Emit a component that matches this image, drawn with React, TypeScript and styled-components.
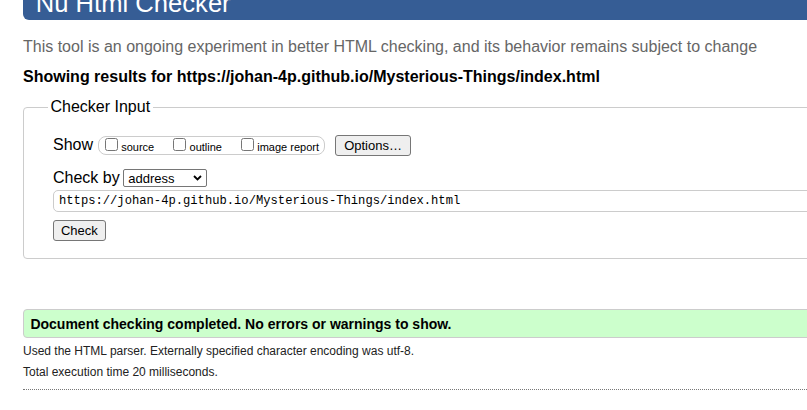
import React from "react";
import styled, { createGlobalStyle } from "styled-components";

const Global = createGlobalStyle`
  html, body { margin: 0; padding: 0; background: #fff; overflow: hidden; }
  body { font-family: "Liberation Sans", Arial, Helvetica, sans-serif; color: #000; }
`;

const Page = styled.div`
  width: 1100px;
  padding-left: 23px;
`;

const Title = styled.h1`
  margin: -17px 0 0 0;
  padding: 6.4px 12.8px 1.2px;
  background: #365d95;
  color: #fff;
  font-size: 25.6px;
  font-weight: normal;
  line-height: 29.4px;
  border-bottom-left-radius: 6px;
`;

const Lead = styled.p`
  margin: 18.2px 0 0;
  font-size: 16px;
  line-height: 18.4px;
  color: #666;
`;

const Results = styled.p`
  margin: 11.4px 0 0;
  font-size: 16px;
  line-height: 18.4px;
  font-weight: bold;
`;

const Fieldset = styled.fieldset`
  margin: 12.1px 0 0;
  padding: 0 0 17.6px 24px;
  border: 1px solid #ccc;
  border-radius: 4px;
  min-width: 0;
`;

const Legend = styled.legend`
  padding: 0 2.5px;
  font-size: 16px;
  line-height: 18.4px;
`;

const FieldBody = styled.div`
  display: flex;
  flex-direction: column;
  align-items: stretch;
  padding-left: 5px;
`;

const Row = styled.div<{ $top: number; $gap: number; $h: number }>`
  display: flex;
  align-items: center;
  margin-top: ${(p) => p.$top}px;
  height: ${(p) => p.$h}px;
  gap: ${(p) => p.$gap}px;
`;

const FieldLabel = styled.span`
  font-size: 16px;
  line-height: 18.4px;
`;

const OptionsBox = styled.div`
  box-sizing: border-box;
  display: flex;
  align-items: center;
  gap: 19px;
  height: 18.7px;
  padding: 0 4.5px 0 5.6px;
  border: 1px solid #ccc;
  border-radius: 8px;
`;

const Option = styled.label`
  display: flex;
  align-items: baseline;
  gap: 3.3px;
  font-size: 11px;
  line-height: 12.6px;
  color: #000;
`;

const Check = styled.input`
  width: 13px;
  height: 13px;
  margin: 0;
`;

const Button = styled.button<{ $ml?: number }>`
  box-sizing: border-box;
  height: 20.7px;
  margin-left: ${(p) => p.$ml ?? 0}px;
  padding: 0 ${(p) => (p.$ml ? 8.3 : 6.9)}px;
  font-family: "Liberation Sans", Arial, sans-serif;
  font-size: 13px;
  color: #000;
  background: #efefef;
  border: 1px solid #767676;
  border-radius: 3px;
  align-self: flex-start;
`;

const SelectWrap = styled.div`
  position: relative;
  display: inline-block;
`;

const Select = styled.select`
  appearance: none;
  -webkit-appearance: none;
  box-sizing: border-box;
  width: 84px;
  height: 18px;
  margin: 0;
  padding: 0 0 0 4.6px;
  font-family: "Liberation Sans", Arial, sans-serif;
  font-size: 13px;
  color: #000;
  background: #fff;
  border: 1px solid #767676;
  border-radius: 2px;
`;

const Chevron = styled.svg`
  position: absolute;
  right: 5px;
  top: 6px;
  pointer-events: none;
`;

const UrlInput = styled.input`
  box-sizing: border-box;
  height: 21.7px;
  margin: 2.7px 0 0;
  padding: 0 5px;
  font-family: "Liberation Mono", "DejaVu Sans Mono", monospace;
  font-size: 12.17px;
  color: #000;
  border: 1px solid #ccc;
  border-radius: 5px;
  outline: none;
`;

const Success = styled.p`
  margin: 50px 0 0;
  padding: 5.8px 6.4px 5.1px;
  background: #ccffcc;
  border: 1px solid #ccc;
  border-radius: 4px;
  font-size: 14px;
  line-height: 16.1px;
  font-weight: bold;
`;

const Info = styled.p<{ $top: number }>`
  margin: ${(p) => p.$top}px 0 0;
  font-size: 12px;
  line-height: 13.8px;
  color: #222;
`;

const Dotted = styled.hr`
  margin: 9px 0 0;
  height: 0;
  border: 0;
  border-top: 1px dotted #777;
`;

export default function App() {
  return (
    <>
      <Global />
      <Page>
        <Title>Nu Html Checker</Title>
        <Lead>
          This tool is an ongoing experiment in better HTML checking, and its behavior remains
          subject to change
        </Lead>
        <Results>Showing results for https://johan-4p.github.io/Mysterious-Things/index.html</Results>
        <Fieldset>
          <Legend>Checker Input</Legend>
          <FieldBody>
            <Row $top={18.05} $gap={5.3} $h={21}>
              <FieldLabel>Show</FieldLabel>
              <OptionsBox>
                <Option>
                  <Check type="checkbox" />
                  source
                </Option>
                <Option>
                  <Check type="checkbox" />
                  outline
                </Option>
                <Option>
                  <Check type="checkbox" />
                  image report
                </Option>
              </OptionsBox>
              <Button type="button" $ml={5}>
                Options…
              </Button>
            </Row>
            <Row $top={13.3} $gap={3} $h={18}>
              <FieldLabel>Check by</FieldLabel>
              <SelectWrap>
                <Select defaultValue="address">
                  <option value="address">address</option>
                  <option value="file">file upload</option>
                  <option value="text">text input</option>
                </Select>
                <Chevron width="9" height="6" viewBox="0 0 9 6">
                  <polyline points="1,1 4.5,4.5 8,1" fill="none" stroke="#000" strokeWidth="1.8" />
                </Chevron>
              </SelectWrap>
            </Row>
            <UrlInput
              type="text"
              readOnly
              value="https://johan-4p.github.io/Mysterious-Things/index.html"
            />
            <Row $top={8.3} $gap={0} $h={20.7}>
              <Button type="button">Check</Button>
            </Row>
          </FieldBody>
        </Fieldset>
        <Success>Document checking completed. No errors or warnings to show.</Success>
        <Info $top={7.3}>
          Used the HTML parser. Externally specified character encoding was utf-8.
        </Info>
        <Info $top={6.8}>Total execution time 20 milliseconds.</Info>
        <Dotted />
      </Page>
    </>
  );
}
